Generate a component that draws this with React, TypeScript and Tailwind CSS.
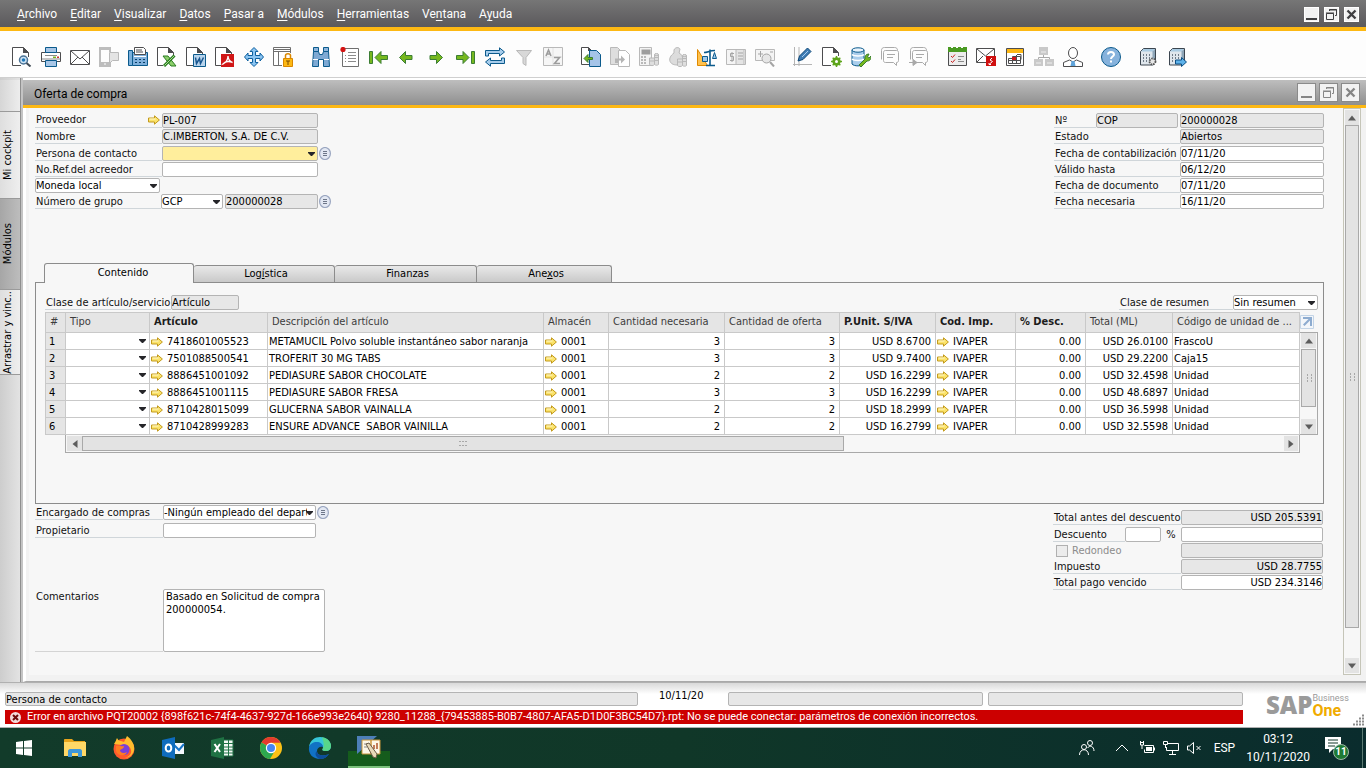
import React from "react";
import clsx from "clsx";

const ink = "#4d4d4f";
const dim = "#b9b9b9";
const blue = "#0b5a8c";

/* ---------- small shared pieces ---------- */

function Caret() {
  return (
    <svg viewBox="0 0 7 4" className="pointer-events-none absolute right-[3px] top-[6px] h-1 w-[7px]" aria-hidden="true">
      <path d="M0 0h7v1L4 4H3L0 1z" fill="#26262a" />
    </svg>
  );
}

function LinkArrow() {
  return (
    <svg viewBox="0 0 12 10" className="h-[10px] w-3 shrink-0" aria-hidden="true">
      <path d="M.5 3h6V.8L11.4 5 6.500 9.200V7h-6z" fill="#fbe36a" stroke="#c39a1c" />
      <path d="M1.500 4h6" stroke="#fff8cf" />
    </svg>
  );
}

function ListButton({ label }: { label: string }) {
  return (
    <button aria-label={label} className="ml-px mt-px h-[13px] w-3 shrink-0">
      <svg viewBox="0 0 12 13" className="h-[13px] w-3" aria-hidden="true">
        <ellipse cx="6" cy="6.500" rx="5.400" ry="6" fill="#e3e8f3" stroke="#9aa6c0" strokeWidth="1.200" />
        <path d="M4 4.500h4M4 6.500h4M4 8.500h4" stroke="#6d7688" />
      </svg>
    </button>
  );
}

type FieldProps = { id?: string; label?: string; value?: string; className?: string; off?: boolean; right?: boolean };

function Field({ id, label, value = "", className, off, right }: FieldProps) {
  return (
    <input
      id={id}
      aria-label={label}
      defaultValue={value}
      readOnly={off}
      className={clsx(
        "h-[15px] min-w-0 shrink-0 rounded-[2px] border border-[#b4b4b4] leading-[13px] text-black outline-none",
        off ? "bg-[#e7e7e7]" : "bg-white",
        right && "text-right",
        className
      )}
    />
  );
}

function Choice({ id, label, value = "", className, yellow }: FieldProps & { yellow?: boolean }) {
  return (
    <div className={clsx("relative h-[15px] shrink-0", className)}>
      <select
        id={id}
        aria-label={label}
        className={clsx(
          "block h-full w-full appearance-none overflow-hidden rounded-[2px] border border-[#b4b4b4] pr-2 leading-[13px] text-black outline-none",
          yellow ? "bg-[#ffee9c]" : "bg-white"
        )}
      >
        <option>{value}</option>
      </select>
      <Caret />
    </div>
  );
}

function Caption({ id, text, className }: { id?: string; text: string; className?: string }) {
  return (
    <label
      htmlFor={id}
      className={clsx("h-[15px] shrink-0 whitespace-nowrap border-b border-[#d0d6da] pl-px leading-4", className)}
    >
      {text}
    </label>
  );
}

function Dots({ tall }: { tall?: boolean }) {
  return (
    <svg viewBox="0 0 8 8" className={clsx("h-2 w-2", tall && "rotate-90")} aria-hidden="true">
      <path d="M0 1.500h2M3 1.500h2M6 1.500h2M0 5.500h2M3 5.500h2M6 5.500h2" stroke="#a8a8a8" />
    </svg>
  );
}

function Arrow({ d }: { d: string }) {
  return (
    <svg viewBox="0 0 8 8" className="h-2 w-2" aria-hidden="true">
      <path d={d} fill="#5c5c5c" />
    </svg>
  );
}

/* ---------- top bars ---------- */

const menus = [
  ["", "A", "rchivo"],
  ["", "E", "ditar"],
  ["", "V", "isualizar"],
  ["", "D", "atos"],
  ["", "P", "asar a"],
  ["", "M", "ódulos"],
  ["", "H", "erramientas"],
  ["Ve", "n", "tana"],
  ["A", "y", "uda"],
];

function WindowButtons({ big }: { big?: boolean }) {
  const box = clsx(
    "flex items-center justify-center border bg-[#f2f2f2]",
    big ? "h-[19px] w-[19px] border-[#8a8a8a] text-[#858585]" : "h-[15px] w-[15px] border-white text-[#3f3f41]"
  );
  return (
    <div className={clsx("flex", big ? "gap-[3px]" : "gap-[5px]")}>
      <button aria-label="Minimizar" className={box}>
        <svg viewBox="0 0 13 13" className="h-[13px] w-[13px]">
          <path d="M1 11h11" stroke="currentColor" strokeWidth="2" />
        </svg>
      </button>
      <button aria-label="Restaurar" className={box}>
        <svg viewBox="0 0 13 13" className="h-[13px] w-[13px]" fill="none" stroke="currentColor">
          <path d="M1.500 5.500h7v6h-7zM1 5h8M4.500 3V1.500h7v6H10M4 2h8" />
        </svg>
      </button>
      <button aria-label="Cerrar" className={box}>
        <svg viewBox="0 0 13 13" className="h-[13px] w-[13px]">
          <path d="M2.500 2.500l8 8M10.500 2.500l-8 8" stroke="currentColor" strokeWidth="2.400" />
        </svg>
      </button>
    </div>
  );
}

function MenuBar() {
  return (
    <header className="flex h-[31px] items-center justify-between border-b-4 border-[#fdb813] bg-linear-to-b from-[#767676] to-[#5b595c] pl-[17px] pr-[7px] pt-px">
      <nav className="flex gap-[13px] font-['Roboto',sans-serif] text-xs text-white">
        {menus.map(([a, key, b]) => (
          <a href="#" key={a + key + b}>
            {a}
            <span className="underline underline-offset-2">{key}</span>
            {b}
          </a>
        ))}
      </nav>
      <WindowButtons />
    </header>
  );
}

function Page({ c = ink }: { c?: string }) {
  return (
    <>
      <path d="M.5.500h11l5 5V18.500H.5z" fill="#fff" stroke={c} />
      <path d="M11 0l6 6h-6z" fill={c} />
    </>
  );
}

function Coins({ x = 10, y = 6 }: { x?: number; y?: number }) {
  return (
    <g transform={`translate(${x} ${y})`} fill="#dedede" stroke={dim}>
      <path d="M.5 5v6.500c1 1.500 4 1.500 5 0V5z" />
      <path d="M5.500 1.500v10c1 1 3 1 4 0v-10z" />
      <ellipse cx="7.500" cy="1.500" rx="2" ry="1" />
      <path d="M5.500 4.500h4M5.500 7.500h4M.5 8h5" />
    </g>
  );
}

function Server() {
  return (
    <>
      <path d="M1.500 4.500l3-3h12v13l-2.500 3.500H1.500z" fill="#dfe6ec" stroke="#3c4650" />
      <path d="M2 4.500L4.500 2H16l-2.500 2.500z" fill="#a9cbe2" />
      <path d="M13.500 4.500v13l2.500-3.500V2z" fill="#8fa6b8" />
      <path d="M4 8h1M7 8h1M10 8h1M4 11h1M7 11h1M10 11h1M4 14h1M7 14h1M10 14h1" stroke="#4c5a68" strokeWidth="1.500" />
    </>
  );
}

const green = { fill: "#76b81e", stroke: "#3b7d34" };

// one drawing per button, grouped as on the bar
const tools: [string, React.ReactNode][][] = [
  [
    ["Vista previa", <><Page /><path d="M9 10h8v9H9z" fill="#fff" /><circle cx="11.500" cy="13" r="4" fill="#cfe3f4" stroke="#4b7395" strokeWidth="1.500" /><circle cx="11.500" cy="13" r="1.800" fill="#1f78b8" /><path d="M14.500 16l4 3.500" stroke="#3f4a55" strokeWidth="2" /></>],
    ["Imprimir", <><path d="M.5 5.500h19v9H.5z" fill="#fff" stroke={ink} /><path d="M4.500.5h11v5h-11z" fill="#a8c6e6" stroke={blue} /><path d="M4 8.500h12M1 12h18" stroke="#8b8b8b" /><path d="M12 10.300h3" stroke="#7ab51d" strokeWidth="1.500" /><path d="M16 10.300h2" stroke="#c33" strokeWidth="1.500" /><path d="M4.500 13.500h11v6h-11z" fill="#a8c6e6" stroke={blue} /></>],
    ["Correo", <><path d="M.5 3.500h19v14H.5z" fill="#fff" stroke={ink} /><path d="M1 4l9 8 9-8M1 17l7-7M19 17l-7-7" fill="none" stroke={ink} /></>],
    ["SMS", <><path d="M0 0h12v5h-2V3H2v12h8v-2h2v7H0z" fill="#bdbdbd" /><path d="M5 17h2" stroke="#fff" /><path d="M10.500 5.500h9v8h-6l-3 3z" fill="#e4e4e4" stroke={dim} /></>],
    ["Fax", <><path d="M.5 3.500h4v15h-4z" fill="#7ab0dc" stroke={blue} /><path d="M4.500 5.500h15v13h-15z" fill="#7fb0dc" stroke={blue} /><path d="M6.500.5h9l2 2v5h-11z" fill="#fff" stroke={ink} /><path d="M8 3h6M8 5h7" stroke={ink} /><path d="M6 9.500h12" stroke="#fff" /><path d="M7 12.500h2M11 12.500h2M15 12.500h2M7 15.500h2M11 15.500h2M15 15.500h2" stroke="#073c63" /></>],
    ["Excel", <><Page /><path d="M6 8h14v12H6z" fill="#fff" /><path d="M6 9h5l8 10h-5z" fill="#8ccf6a" stroke="#2a7d22" /><path d="M17.500 8.500L7 19" stroke="#2a7d22" strokeWidth="3" /><path d="M17 9L7.500 18.500" stroke="#a9dd8c" /></>],
    ["Word", <><Page /><path d="M7.500 7.500h12v12h-12z" fill="#b8d4ec" stroke={blue} /><path d="M9.500 10.500l1 6 3-5 1 5 3-6" fill="none" stroke="#17558f" strokeWidth="1.500" /></>],
    ["PDF", <><Page /><path d="M6 7h13v13H6z" fill="#d01616" /><path d="M8 17c3-1 5-5 5-8 0 3 2 6 4.500 6.500C14 14 10 14.500 8 17z" fill="none" stroke="#fff" strokeWidth="1.300" /></>],
    ["Mover", <path d="M10 .5l4 4h-2.500V8.500H16V6l3.500 4L16 14v-2.500h-4.500v4H14l-4 4-4-4h2.500v-4H4V14L.5 10 4 6v2.500h4.500V4.500H6z" fill="#8cc5f2" stroke="#0d5f9e" />],
    ["Bloquear", <><path d="M.5.500h17v18H.5z" fill="#fff" stroke="#6f6f6f" /><path d="M1 2.500h16M1 4.500h16M5.500 5v13" stroke="#6f6f6f" /><path d="M9 6h9v13H9z" fill="#fff" /><path d="M12.500 11V8.500c0-2.500 5-2.500 5 0V11" fill="none" stroke="#d98700" strokeWidth="1.500" /><path d="M10.500 11.500h9v8h-9z" fill="#fdb813" stroke="#d98700" /><path d="M13 14h4M15 14v4" stroke="#7a4a00" /></>],
  ],
  [
    ["Buscar", <><path d="M2.500.5h5v4h-5zM12.500.5h5v4h-5z" fill="#8fb6dc" stroke={blue} /><path d="M2.500 4.500h5l1 3h3l1-3h5l1 15h-6v-7h-5v7h-6z" fill="#7ea9d3" stroke={blue} /><path d="M2 12.500h5M13 12.500h5" stroke="#fff" /></>],
    ["Lista", <><path d="M2.500 1.500h16v18h-16z" fill="#fff" stroke="#6f6f6f" /><path d="M8 5.500h8M8 8.500h8M8 11.500h8M8 14.500h8M5 8.500h1M5 11.500h1M5 14.500h1" stroke="#8b8b8b" /><circle cx="3" cy="2.500" r="2.600" fill="#d41313" /></>],
    ["Primer registro", <><path d="M.5 4.500h3v12h-3z" {...green} /><path d="M6 10.500l6-6v4h6.500v4H12v4z" {...green} /></>],
    ["Registro anterior", <path d="M1.500 10.500l6-6v4h6.500v4H7.500v4z" {...green} />],
    ["Registro siguiente", <path d="M15.500 10.500l-6-6v4H3v4h6.500v4z" {...green} />],
    ["Último registro", <><path d="M15.500 4.500h3v12h-3z" {...green} /><path d="M13 10.500l-6-6v4H.5v4H7v4z" {...green} /></>],
    ["Actualizar", <><path d="M.5 9V3.500h14V.8L19.500 5l-5 4V6.500h-11V9zM19.500 11v5.500h-14v2.700L.5 15l5-4v2.500h11V11z" fill="#a7cdec" stroke={blue} /></>],
    ["Filtrar", <><path d="M2.500 3.500h15L12 10.500v8l-3-2v-6z" fill="#d8d8d8" stroke={dim} /></>],
    ["Ordenar", <><path d="M.5.500h19v18H.5z" fill="#f6f6f6" stroke={dim} /><path d="M10 1v17M1 10h18" stroke="#e2e2e2" /><path d="M3 9l2.500-6L8 9M4 7h3M11 10.500h5.500l-5 6H17" fill="none" stroke="#9c9c9c" strokeWidth="1.600" /></>],
  ],
  [
    ["Copiar de", <><path d="M.5.500h7l3 3v14H.5z" fill="#fff" stroke={ink} /><path d="M7 0l4 4H7z" fill={ink} /><path d="M8.500 3.500h7l4 4v12h-11z" fill="#a5c4e8" stroke={blue} /><path d="M3 11.500l4-4v3h4.500v2H7v3z" {...green} /></>],
    ["Copiar a", <><path d="M.5.500h7l3 3v14H.5z" fill="#dedede" stroke={dim} /><path d="M8.500 3.500h7l4 4v12h-11z" fill="#fff" stroke={dim} /><path d="M5 16v-4.500h6v-3l4 4-4 4v-3H8V16z" fill="#b5b5b5" /></>],
    ["Beneficio", <><path d="M.5.500h12v18H.5z" fill="#f4f4f4" stroke={dim} /><path d="M2.500 2.500h9v5h-9z" fill="#9e9e9e" /><path d="M2 10h2M5 10h2M2 13h2M5 13h2M2 16h2M5 16h2" stroke="#a5a5a5" strokeWidth="1.500" /><Coins x={10} y={6} /></>],
    ["Medios de pago", <><path d="M6 3c1-3 5-3 6-1l-1 4C16 8 17 18 9 18S-1 11 6 6z" fill="#dcdcdc" stroke={dim} /><Coins x={9} y={7} /></>],
    ["Peso y volumen", <><path d="M.5 2.500V18.500h10z" fill="#ffc14d" stroke="#e08a00" /><path d="M13 2.500v16M9 18.500h9M7 5.500c4 0 5-2 11-2" fill="none" stroke={blue} strokeWidth="1.600" /><path d="M5.500 9.500h5v5h-5zM15.500 11.500l2-6 2 6z" fill="#9ec9ec" stroke={blue} /></>],
    ["Diario", <><path d="M.5 2.500h19v15H.5z" fill="#f4f4f4" stroke={dim} /><path d="M10 2.500h8v15h-8z" fill="#e4e4e4" stroke={dim} /><path d="M12 6h5M12 9h5M12 12h5" stroke="#a5a5a5" /><path d="M8 6.500H4.500v3h3v4H4M6 5v10" fill="none" stroke="#a5a5a5" /></>],
    ["Análisis", <><path d="M.5 2.500h19v11H.5z" fill="#f4f4f4" stroke={dim} /><path d="M3 7h5M5.500 4v6M15 5h3" stroke="#a5a5a5" /><circle cx="11.500" cy="11.500" r="4.500" fill="#e6e6e6" stroke="#a5a5a5" /><path d="M15 15l4 4.500" stroke="#a5a5a5" strokeWidth="2" /></>],
  ],
  [
    ["Editar", <><path d="M1.500 0v19M0 17.500h19M6 0v19" stroke="#b5b5b5" /><path d="M5 14l1.500-5 8-8L18 4.500l-8 8z" fill="#3f7db5" stroke="#0d4777" /><path d="M9 10l6-6" stroke="#a9cdf0" /></>],
    ["Parámetros", <><Page /><path d="M9 9h9v10H9z" fill="#fff" /><circle cx="14.500" cy="14.500" r="3" fill="#fff" stroke="#5ea51b" strokeWidth="2.400" /><path d="M14.500 9v11M9 14.500h11M10.700 10.700l7.600 7.600M18.300 10.700l-7.600 7.600" stroke="#5ea51b" strokeWidth="1.500" /><circle cx="14.500" cy="14.500" r="1.500" fill="#fff" /></>],
    ["Base de datos", <><path d="M1 3v14c2 2.500 10 2.500 12 0V3z" fill="#a9cdec" stroke={blue} /><ellipse cx="7" cy="3" rx="6" ry="2.200" fill="#eaf4fc" stroke={blue} /><path d="M1 7.500c2 2 10 2 12 0M1 12c2 2 10 2 12 0" fill="none" stroke="#fff" strokeWidth="1.500" /><path d="M8 18l6-6c-.5-3 1-5 4-5l-1.500 3 1.500 1 2-2c0 4-1.500 5-4 5l-6 6z" fill="#76b81e" stroke="#3b7d34" /></>],
    ["Mensajes", <g fill="#fdfdfd" stroke="#a9a9a9"><path d="M1.500 12.500v-9c0-2 1-3 3-3h10c2 0 3 1 3 3" /><path d="M3.500 5.500c0-1 .5-2 2-2h11c1.500 0 2 1 2 2v8c0 1-.5 2-2 2v3l-3-3h-8c-1.500 0-2-1-2-2z" /><path d="M7 7.500h8M7 10.500h6" /></g>],
    ["Reenviar mensaje", <g fill="#fdfdfd" stroke="#a9a9a9"><path d="M1.500 12.500v-9c0-2 1-3 3-3h10c2 0 3 1 3 3" /><path d="M3.500 12.500v-7c0-1 .5-2 2-2h11c1.500 0 2 1 2 2v8c0 1-.5 2-2 2v3l-3-3h-6" /><path d="M7 7.500h8M7 10.500h6M0 15.500h6" /><path d="M4 12.500l4 3-4 3z" fill="#a9a9a9" /></g>],
  ],
  [
    ["Tareas", <><path d="M1.500 3.500h18v15h-18z" fill="#ececec" stroke={ink} /><path d="M1 0h3v1h2V0h3v1h2V0h3v1h2V0h4v5H1z" fill="#4a9a22" /><path d="M4 9l1.500 1.500L8 7.500M4 14l1.500 1.500L8 12.500" fill="none" stroke="#c22" /><path d="M11 9.500h6M11 12.500h3M11 14.500h6" stroke="#8b8b8b" /></>],
    ["Alertas", <><path d="M.5 1.500h18v14H.5z" fill="#fff" stroke={ink} /><path d="M1 2l8.500 7L18 2M1 15l6-6" fill="none" stroke={ink} /><path d="M10 9h10v10H10z" fill="#cf1010" /><path d="M16 11l-2 2 2.500 1.500-3 2.500M13 16v1.500h2" fill="none" stroke="#fff" /></>],
    ["Calendario", <><path d="M1.500 1.500h17v17h-17z" fill="#fff" stroke={ink} /><path d="M2 2h16v4H2z" fill="#fdb813" /><path d="M3.500 11.500h4v5h-4zM7.500 9.500h8v7h-8zM3.500 13.500h12M11.500 8v8M12 7.500h4v5" stroke={ink} /><path d="M7 10h4v3H7z" fill="#d01616" /></>],
    ["Organigrama", <><path d="M5 0h9v8H5zM0 12h9v7H0zM11 12h9v7h-9z" fill="#c9c9c9" /><path d="M9.500 8v2.500M4.500 12v-1.500h11V12" fill="none" stroke="#a9a9a9" /><path d="M7 5h5M2 16h5M13 16h5" stroke="#efefef" /></>],
    ["Usuario", <><ellipse cx="10" cy="6" rx="4.500" ry="5.500" fill="#fff" stroke={ink} /><path d="M.5 19.500v-4l6-2.500 3.500 2 3.500-2 6 2.500v4z" fill="#fff" stroke={ink} /><path d="M8.500 14h3l1 5h-5z" fill="#5fa3da" /></>],
  ],
  [
    ["Ayuda", <><circle cx="10" cy="10" r="9.500" fill="#86b2dc" stroke={blue} /><path d="M7 7.500C7 4 13 4 13 7.500c0 2-3 2.200-3 4.500M10 13.500v2" fill="none" stroke="#fff" strokeWidth="2" /></>],
  ],
  [
    ["Servidor", <><Server /><circle cx="13.500" cy="14.500" r="3" fill="#e6e6e6" stroke="#555" strokeWidth="1.800" strokeDasharray="1.500 1" /></>],
    ["Exportar", <><Server /><path d="M7.500 13h6v-2.500l5 4.500-5 4.500V17h-6z" fill="#5eb2ea" stroke="#0d4f84" /></>],
  ],
];

function Toolbar() {
  return (
    <div className="flex h-[47px] items-start gap-[9px] border-b border-[#cfcfcf] bg-[#fdfdfd] pl-[7px] pt-4">
      {tools.map((group, i) => (
        <div key={i} className="flex">
          {group.map(([name, art]) => (
            <button key={name} aria-label={name} title={name} className="w-[29px] pl-[5px]">
              <svg viewBox="0 0 20 20" className="h-5 w-5" fill="none" aria-hidden="true">
                {art}
              </svg>
            </button>
          ))}
        </div>
      ))}
    </div>
  );
}

/* ---------- left rail ---------- */

function Rail() {
  const tab = "flex items-center justify-center border-b border-[#9a9a9a] bg-linear-to-r pr-[3px]";
  const text = "rotate-180 whitespace-nowrap [writing-mode:vertical-rl]";
  return (
    <aside className="flex w-[21px] shrink-0 flex-col border-r border-[#8f8f8f] bg-linear-to-r from-[#cdcdcd] to-[#e3e3e3] pt-[2px] text-black">
      <div className={clsx(tab, "h-8 from-[#d6d6d6] to-[#ededed]")} />
      <button className={clsx(tab, "h-[87px] from-[#dedede] to-[#efefef]")}>
        <span className={text}>Mi cockpit</span>
      </button>
      <button className={clsx(tab, "h-[91px] from-[#a6a6a6] to-[#bdbdbd]")}>
        <span className={text}>Módulos</span>
      </button>
      <button className={clsx(tab, "h-[85px] from-[#dedede] to-[#efefef]")}>
        <span className={text}>Arrastrar y vinc..</span>
      </button>
    </aside>
  );
}

/* ---------- document window ---------- */

function Heading() {
  return (
    <div className="flex items-start justify-between">
      <div className="flex flex-col gap-px">
        <div>
          <div className="flex h-4">
            <label htmlFor="prov" className="flex h-[15px] w-[127px] shrink-0 items-center justify-between border-b border-[#d0d6da] pl-px pr-[2px] leading-4">
              Proveedor
              <LinkArrow />
            </label>
            <Field id="prov" value="PL-007" off className="w-[156px]" />
          </div>
          <div className="flex h-4">
            <Caption id="nombre" text="Nombre" className="w-[127px]" />
            <Field id="nombre" value="C.IMBERTON, S.A. DE C.V." off className="w-[156px]" />
          </div>
        </div>
        <div>
          <div className="flex h-4">
            <Caption id="persona" text="Persona de contacto" className="w-[127px]" />
            <Choice id="persona" yellow className="w-[156px]" />
            <ListButton label="Lista de contactos" />
          </div>
          <div className="flex h-4">
            <Caption id="ref" text="No.Ref.del acreedor" className="w-[127px]" />
            <Field id="ref" className="w-[156px]" />
          </div>
          <div className="flex h-4">
            <Choice label="Moneda" value="Moneda local" className="w-[125px]" />
          </div>
          <div className="flex h-4">
            <Caption id="grupo" text="Número de grupo" className="w-[126px]" />
            <Choice id="grupo" value="GCP" className="w-[62px]" />
            <Field label="Número" value="200000028" off className="ml-[2px] w-[93px]" />
            <ListButton label="Lista de grupos" />
          </div>
        </div>
      </div>

      <div className="flex flex-col gap-px">
        <div>
          <div className="flex h-4">
            <Caption id="serie" text="Nº" className="w-[42px]" />
            <Field id="serie" value="COP" off className="mr-[2px] w-[82px]" />
            <Field label="Número de documento" value="200000028" off className="w-36" />
          </div>
          <div className="flex h-4">
            <Caption id="estado" text="Estado" className="w-[126px]" />
            <Field id="estado" value="Abiertos" off className="w-36" />
          </div>
        </div>
        <div>
          {[
            ["Fecha de contabilización", "07/11/20"],
            ["Válido hasta", "06/12/20"],
            ["Fecha de documento", "07/11/20"],
            ["Fecha necesaria", "16/11/20"],
          ].map(([name, value]) => (
            <div key={name} className="flex h-4">
              <Caption id={name} text={name} className="w-[126px]" />
              <Field id={name} value={value} className="w-36" />
            </div>
          ))}
        </div>
      </div>
    </div>
  );
}

function Tabs() {
  const rest =
    "h-[17px] rounded-t-[3px] border border-b-0 border-l-0 border-[#8c8c8c] bg-linear-to-b from-[#e9e9e9] to-[#c9c9c9] pl-1";
  return (
    <div role="tablist" className="flex items-end pl-[9px] text-black">
      <button role="tab" aria-selected="true" className="relative -mb-px h-5 w-[150px] rounded-t-[3px] border border-b-0 border-[#8c8c8c] bg-[#f7f7f7] pl-2">
        Contenido
      </button>
      <button role="tab" className={clsx(rest, "w-[141px]")}>
        Log<u>í</u>stica
      </button>
      <button role="tab" className={clsx(rest, "w-[142px]")}>
        Finanzas
      </button>
      <button role="tab" className={clsx(rest, "w-[135px]")}>
        Ane<u>x</u>os
      </button>
    </div>
  );
}

const columns: [string, string, boolean?][] = [
  ["#", "w-5"],
  ["Tipo", "w-[84px]"],
  ["Artículo", "w-[118px]", true],
  ["Descripción del artículo", "w-[276px]"],
  ["Almacén", "w-[65px]"],
  ["Cantidad necesaria", "w-[116px]"],
  ["Cantidad de oferta", "w-[115px]"],
  ["P.Unit. S/IVA", "w-[96px]", true],
  ["Cod. Imp.", "w-20", true],
  ["% Desc.", "w-[70px]", true],
  ["Total (ML)", "w-[87px]"],
  ["Código de unidad de ...", ""],
];

const items = [
  ["7418601005523", "METAMUCIL Polvo soluble instantáneo sabor naranja", "3", "USD 8.6700", "USD 26.0100", "FrascoU"],
  ["7501088500541", "TROFERIT 30 MG TABS", "3", "USD 9.7400", "USD 29.2200", "Caja15"],
  ["8886451001092", "PEDIASURE SABOR CHOCOLATE", "2", "USD 16.2299", "USD 32.4598", "Unidad"],
  ["8886451001115", "PEDIASURE SABOR FRESA", "3", "USD 16.2299", "USD 48.6897", "Unidad"],
  ["8710428015099", "GLUCERNA SABOR VAINALLA", "2", "USD 18.2999", "USD 36.5998", "Unidad"],
  ["8710428999283", "ENSURE ADVANCE  SABOR VAINILLA", "2", "USD 16.2799", "USD 32.5598", "Unidad"],
];

const cell = "h-[17px] overflow-hidden whitespace-pre border-b border-r border-[#c9c9c9] pt-px leading-[15px] text-black";

function Linked({ text }: { text: string }) {
  return (
    <span className="flex items-center gap-1 pl-px">
      <LinkArrow />
      {text}
    </span>
  );
}

function Items() {
  return (
    <table className="w-full table-fixed border-separate border-spacing-0 border-l border-t border-[#c9c9c9] bg-white">
      <thead>
        <tr>
          {columns.map(([name, width, bold]) => (
            <th
              key={name}
              className={clsx(
                "h-5 whitespace-nowrap border-b border-r border-[#c9c9c9] bg-[#e5e5e5] pb-[2px] pl-1 pr-0 pt-0 text-left leading-4",
                width,
                bold ? "font-bold text-[#1c1c1c]" : "font-normal text-[#3c3c3c]"
              )}
            >
              {name}
            </th>
          ))}
        </tr>
      </thead>
      <tbody>
        {items.map(([code, name, qty, price, total, unit], i) => (
          <tr key={code}>
            <td className={clsx(cell, "bg-[#e5e5e5] pl-[3px]")}>{i + 1}</td>
            <td className={cell}>
              <div className="relative -mt-px">
                <select aria-label={`Tipo ${i + 1}`} className="block h-4 w-full appearance-none outline-none">
                  <option></option>
                </select>
                <Caret />
              </div>
            </td>
            <td className={cell}>
              <Linked text={code} />
            </td>
            <td className={clsx(cell, "pl-px")}>{name}</td>
            <td className={cell}>
              <Linked text="0001" />
            </td>
            <td className={clsx(cell, "pr-1 text-right")}>{qty}</td>
            <td className={clsx(cell, "pr-1 text-right")}>{qty}</td>
            <td className={clsx(cell, "pr-1 text-right")}>{price}</td>
            <td className={cell}>
              <Linked text="IVAPER" />
            </td>
            <td className={clsx(cell, "pr-1 text-right")}>0.00</td>
            <td className={clsx(cell, "pr-1 text-right")}>{total}</td>
            <td className={clsx(cell, "pl-px")}>{unit}</td>
          </tr>
        ))}
      </tbody>
    </table>
  );
}

function Content() {
  return (
    <section className="min-h-[222px] border border-[#8c8c8c] pb-[50px] pl-[9px] pr-[5px] pt-3">
      <div className="flex justify-between">
        <div className="flex">
          <Caption id="clase" text="Clase de artículo/servicio" className="w-[126px]" />
          <Field id="clase" value="Artículo" off className="w-[68px]" />
        </div>
        <div className="flex">
          <Caption id="resumen" text="Clase de resumen" className="w-[114px]" />
          <Choice id="resumen" value="Sin resumen" className="w-[85px]" />
        </div>
      </div>

      <div className="mt-[2px] flex">
        <div className="min-w-0 flex-1">
          <Items />
          <div className="ml-5 flex h-[18px] items-center border border-t-0 border-[#a9a9a9] px-px">
            <button aria-label="Izquierda" className="flex h-[15px] w-[15px] items-center justify-center bg-[#e3e3e3]">
              <Arrow d="M1.500 4l5-4v8z" />
            </button>
            <div className="flex h-[15px] min-w-0 flex-1">
              <div className="flex w-[762px] items-center justify-center border border-[#a9a9a9] bg-[#e3e3e3]">
                <Dots />
              </div>
            </div>
            <button aria-label="Derecha" className="flex h-[15px] w-[14px] items-center justify-center bg-[#e3e3e3]">
              <Arrow d="M6.500 4l-5-4v8z" />
            </button>
          </div>
        </div>
        <div className="flex w-[18px] flex-col pb-[18px]">
          <button aria-label="Ampliar" className="h-5">
            <svg viewBox="0 0 14 14" className="h-[14px] w-[14px]">
              <path d="M.5.500h13v13H.5z" fill="#f3f6fa" stroke="#c3d4e6" />
              <path d="M3 2h9v9h-2V5.500L4.500 11 3 9.500 8.500 4H3z" fill="#8eacd0" />
            </svg>
          </button>
          <div className="flex flex-1 flex-col border border-l-0 border-[#a9a9a9] px-px">
            <button aria-label="Subir" className="flex h-[15px] items-center justify-center bg-[#e3e3e3]">
              <Arrow d="M4 1.500l4 5H0z" />
            </button>
            <div className="mt-px flex h-[58px] items-center justify-center border border-[#a9a9a9] bg-[#e3e3e3]">
              <Dots tall />
            </div>
            <button aria-label="Bajar" className="mt-auto flex h-[15px] items-center justify-center bg-[#e3e3e3]">
              <Arrow d="M4 6.500l-4-5h8z" />
            </button>
          </div>
        </div>
      </div>
    </section>
  );
}

function Footing() {
  return (
    <div className="flex items-start justify-between pr-px">
      <div className="pt-px">
        <div className="flex">
          <Caption id="encargado" text="Encargado de compras" className="w-32" />
          <Choice id="encargado" value="-Ningún empleado del departamento" className="w-[153px]" />
          <ListButton label="Lista de empleados" />
        </div>
        <div className="mt-[3px] flex">
          <Caption id="propietario" text="Propietario" className="w-32" />
          <Field id="propietario" className="w-[153px]" />
        </div>
        <div className="mt-[51px] flex">
          <label htmlFor="comentarios" className="w-32 border-b border-[#d4d4d4] pl-px leading-4">
            Comentarios
          </label>
          <textarea
            id="comentarios"
            defaultValue="Basado en Solicitud de compra 200000054."
            className="h-[63px] w-[162px] resize-none rounded-[2px] border border-[#b4b4b4] bg-white pl-[2px] leading-[13px] text-black outline-none"
          />
        </div>
      </div>

      <div className="flex flex-col gap-px pt-[6px]">
        <div className="flex h-4">
          <Caption id="antes" text="Total antes del descuento" className="w-32" />
          <Field id="antes" value="USD 205.5391" off right className="w-[142px]" />
        </div>
        <div>
          <div className="flex h-4">
            <Caption id="desc" text="Descuento" className="w-[72px]" />
            <Field id="desc" className="w-9" />
            <span className="w-5 text-center leading-4">%</span>
            <Field label="Importe de descuento" className="w-[142px]" />
          </div>
          <div className="flex h-4">
            <label className="flex w-32 items-center gap-1 pl-[3px] leading-4 text-[#8c8c8c]">
              <input type="checkbox" disabled className="h-3 w-3 appearance-none border border-[#b0b0b0] bg-[#ececec]" />
              Redondeo
            </label>
            <Field label="Importe de redondeo" off className="w-[142px]" />
          </div>
          <div className="flex h-4">
            <Caption id="impuesto" text="Impuesto" className="w-32" />
            <Field id="impuesto" value="USD 28.7755" off right className="w-[142px]" />
          </div>
          <div className="flex h-4">
            <Caption id="total" text="Total pago vencido" className="w-32" />
            <Field id="total" value="USD 234.3146" right className="w-[142px]" />
          </div>
        </div>
      </div>
    </div>
  );
}

function DocumentWindow() {
  return (
    <main className="flex min-w-0 flex-1 flex-col border-l-2 border-[#c4c4c4] bg-white pt-[2px]">
      <div className="flex h-7 items-center justify-between border-b-3 border-[#fdb813] bg-linear-to-b from-[#bebebe] to-[#8f8f8f] pl-[11px] pr-[6px]">
        <h1 className="pt-[2px] font-['Roboto',sans-serif] text-xs text-black">Oferta de compra</h1>
        <WindowButtons big />
      </div>
      <div className="flex flex-1 border-b border-l-3 border-b-[#a9a9a9] border-l-white bg-[#f2f2f2] pb-[6px] pl-[3px]">
        <div className="flex min-w-0 flex-1 flex-col bg-[#f7f7f7] pl-[6px] pr-[19px] pt-[5px]">
          <Heading />
          <div className="mt-[53px]">
            <Tabs />
            <Content />
          </div>
          <Footing />
        </div>
        <div className="mr-[5px] flex w-[18px] flex-col border border-[#c5c5b8] bg-[#f7f7f7] p-px">
          <button aria-label="Subir página" className="flex h-[15px] items-center justify-center bg-[#e3e3e3]">
            <Arrow d="M4 1.500l4 5H0z" />
          </button>
          <div className="flex flex-1 flex-col">
            <div className="flex h-[503px] items-center justify-center border border-[#a9a9a9] bg-[#e3e3e3]">
              <Dots tall />
            </div>
          </div>
          <button aria-label="Bajar página" className="flex h-[15px] items-center justify-center bg-[#e3e3e3]">
            <Arrow d="M4 6.500l-4-5h8z" />
          </button>
        </div>
      </div>
    </main>
  );
}

/* ---------- status bar ---------- */

function StatusBar() {
  const box = "h-[14px] rounded-[2px] border border-[#b4b4b4] bg-[#e7e7e7] leading-[13px]";
  return (
    <footer className="flex h-[46px] items-start border-y border-[#b0b0b0] bg-linear-to-b from-[#d9d9d9] to-white to-25% pl-[5px] text-black">
      <div className="flex-1 pt-[9px]">
        <div className="flex">
          <div className={clsx(box, "w-[633px]")}>Persona de contacto</div>
          <div className="-mt-1 w-[90px] pl-[21px] leading-4">10/11/20</div>
          <div className={clsx(box, "mr-[5px] flex-1")} />
          <div className={clsx(box, "flex-1")} />
        </div>
        <div role="alert" className="mt-1 flex h-[14px] items-center gap-[6px] bg-[#cc0000] pl-[5px] font-['Roboto',sans-serif] leading-[14px] text-white">
          <svg viewBox="0 0 11 11" className="h-[11px] w-[11px]" aria-hidden="true">
            <circle cx="5.500" cy="5.500" r="5.500" fill="#f3dada" />
            <path d="M3 3l5 5M8 3L3 8" stroke="#6d0808" strokeWidth="2" />
          </svg>
          Error en archivo PQT20002 &#123;898f621c-74f4-4637-927d-166e993e2640&#125; 9280_11288_&#123;79453885-B0B7-4807-AFA5-D1D0F3BC54D7&#125;.rpt: No se puede conectar: parámetros de conexión incorrectos.
        </div>
      </div>
      <div className="relative flex h-full w-[123px] items-center pl-[23px] font-['Open_Sans',sans-serif]">
        <span className="text-2xl font-extrabold leading-6 text-[#9a9a9a]">SAP</span>
        <span className="flex flex-col font-['Roboto',sans-serif]">
          <span className="text-[9px] leading-[11px] text-[#9a9a9a]">Business</span>
          <span className="text-base font-bold leading-[14px] text-[#f0ab00]">One</span>
        </span>
        <svg viewBox="0 0 12 12" className="absolute bottom-px right-px h-3 w-3" aria-hidden="true">
          <path d="M9 1.500h2M6 4.500h5M3 7.500h8M0 10.500h11" stroke="#8c8c8c" strokeWidth="2" strokeDasharray="2 1" />
        </svg>
      </div>
    </footer>
  );
}

/* ---------- taskbar ---------- */

const apps: [string, React.ReactNode][] = [
  ["Explorador", <><path d="M1 4c0-1 .5-1 1-1h7l2 2h11v15H1z" fill="#e8a51c" /><path d="M1 6h22v14H1z" fill="#ffd867" /><path d="M5 21v-6c0-1 1-2 2-2h10c1 0 2 1 2 2v6h-4v-4H9v4z" fill="#3f97d8" /></>],
  ["Firefox", <><circle cx="12" cy="13" r="10.500" fill="#ff5a2c" /><path d="M2 8c2-3 2-4 3-6 1 2 2 3 4 3l3 1 3-6c4 3 8 8 7 14-1 5-5 8-10 8 6-1 8-5 7-8-1-4-5-6-9-5z" fill="#ffbd2e" /><circle cx="12" cy="13.500" r="5.500" fill="#7a3fd8" /><path d="M4 10c3-1 5 1 8 0 0 3-3 3-4 4 0 3 4 4 7 2-1 4-9 5-11-1z" fill="#ff7b22" /></>],
  ["Outlook", <><path d="M12 7h11v11H12z" fill="#f5f9fd" /><path d="M13 9l5 5 5-6" fill="none" stroke="#1674c9" strokeWidth="2" /><path d="M1 4l13-3v22L1 20z" fill="#0f6cbd" /><ellipse cx="7.500" cy="12" rx="2.800" ry="3.600" fill="none" stroke="#fff" strokeWidth="2" /></>],
  ["Excel", <><path d="M13 4h10v16H13z" fill="#f3f8f5" stroke="#217346" /><path d="M13 7.500h10M13 11h10M13 14h10M13 17h10M18.500 4v16" stroke="#217346" /><path d="M1 4l13-3v22L1 20z" fill="#1f7244" /><path d="M4.500 8l5.500 8M10 8l-5.500 8" stroke="#fff" strokeWidth="2" /></>],
  ["Chrome", <><circle cx="12" cy="12" r="11" fill="#fbc116" /><path d="M12 12L2.500 6.500A11 11 0 0 1 21.600 6.800H12z" fill="#e33b2e" /><path d="M2.500 6.500A11 11 0 0 0 11 23l5-8.500-4-2.500z" fill="#2da94f" /><circle cx="12" cy="12" r="5.200" fill="#fff" /><circle cx="12" cy="12" r="4" fill="#4586f3" /></>],
  ["Edge", <><path d="M1 11C2 4 7 1 12 1c7 0 11 5 11 9 0 3-2 5-5 5-4 0-4-1-3-3 0-3-3-5-6-5-4 0-7 2-8 4z" fill="#37c6d9" /><path d="M14 1.200C20 2 23 6 23 10c0 3-2 5-5 5-4 0-4-1-3-3 2-3 0-7-1-10.800z" fill="#58d68a" /><path d="M1 11c1-3 4-5 8-5 3 0 6 2 6 5-3-1-6 1-6 4 0 4 5 6 12 3-2 3-5 5-9 5C5 23 0 18 1 11z" fill="#1172c4" /><path d="M9 15c0 4 5 6 12 3-2 3-5 5-9 5-4-1-6-6-3-8z" fill="#0d4d98" /></>],
  ["SAP Business One", <><path d="M0 0h20L0 18z" fill="#4d7fb8" /><path d="M5 4h9v14H5zM14 4h9v14h-9z" fill="#fdf7e6" stroke="#c9953b" /><path d="M7 8h4M7 11h3" stroke="#8a8a8a" /><path d="M17 13V9M20 13V7" stroke="#b0562a" strokeWidth="1.500" /><path d="M9 8l3-1 8 11-1 4-3-1z" fill="#e8d9b8" stroke="#6a5a45" /></>],
];

function Taskbar() {
  return (
    <div className="flex h-10 items-stretch justify-between bg-linear-to-r from-[#123b2a] via-[#103728] to-[#0a2c2d] font-['Roboto',sans-serif] text-xs text-white">
      <div className="flex">
        <button aria-label="Inicio" className="flex w-[50px] items-center pl-4">
          <svg viewBox="0 0 16 16" className="h-4 w-4" fill="#fff">
            <path d="M0 2l7-1v6.500H0zM8 .9L16 0v7.500H8zM0 8.500h7V15l-7-1zM8 8.500h8V16l-8-1z" />
          </svg>
        </button>
        {apps.map(([name, art], i) => (
          <button
            key={name}
            aria-label={name}
            className={clsx(
              "flex items-center justify-center",
              i === 6
                ? "ml-1 w-[42px] border-b-2 border-[#7cc17c] bg-linear-to-b from-transparent from-60% to-[#155c1c] to-60% pt-[2px]"
                : "w-[49px]"
            )}
          >
            <svg viewBox="0 0 24 24" className="h-6 w-6">
              {art}
            </svg>
          </button>
        ))}
      </div>
      <div className="flex items-center">
        <svg viewBox="0 0 16 16" className="mr-[20px] h-4 w-4" fill="none" stroke="#fff">
          <circle cx="5" cy="7" r="2.500" />
          <path d="M.5 15c0-7 9-7 9 0" />
          <circle cx="11" cy="3" r="2.500" />
          <path d="M8.500 8c2-3 6.500-2 6.500 3" />
        </svg>
        <svg viewBox="0 0 14 8" className="mr-[10px] h-2 w-[14px]" fill="none" stroke="#fff">
          <path d="M1 7l6-6 6 6" />
        </svg>
        <svg viewBox="0 0 16 14" className="mr-2 h-[14px] w-4" fill="none" stroke="#fff">
          <path d="M5.500 4.500h9v7h-9v-3M15.500 6.500v3M1 1.500h4M1.500 0v4h3V0M3 4v4" />
          <path d="M7 6h6v4H7z" fill="#fff" stroke="none" />
        </svg>
        <svg viewBox="0 0 16 14" className="mr-2 h-[14px] w-4" fill="none" stroke="#fff">
          <path d="M5 2.500h10.500v7H3.500V6M9.500 10v3M6 13.500h7M.5.500h4v3h-4zM2.500 4v3" />
        </svg>
        <svg viewBox="0 0 16 12" className="mr-[11px] h-3 w-4" fill="none" stroke="#fff">
          <path d="M.5 4v4h2l4 3.500V.5L2.500 4zM9.500 4l4 4M13.500 4l-4 4" />
        </svg>
        <span className="mr-[11px]">ESP</span>
        <div className="mr-[15px] text-center leading-[18px]">
          03:12
          <br />
          10/11/2020
        </div>
        <button aria-label="Notificaciones" className="relative mr-[13px] h-6 w-6">
          <svg viewBox="0 0 24 24" className="h-6 w-6">
            <path d="M0 1h16v12h-8l-4 4v-4H0z" fill="#fff" />
            <path d="M3 4h10M3 7h10M3 10h7" stroke="#12372b" />
            <circle cx="16" cy="16" r="7.500" fill="#1f7a35" stroke="#9db8a6" />
          </svg>
          <span className="absolute bottom-px right-0 w-4 text-center text-[10px] font-bold leading-[14px]">11</span>
        </button>
        <span className="mr-[3px] h-full border-l border-[#5b7a72]" />
      </div>
    </div>
  );
}

export default function App() {
  return (
    <div className="flex min-h-screen flex-col overflow-hidden bg-white font-['DejaVu_Sans_Condensed',sans-serif] text-[11px] text-[#111]">
      <MenuBar />
      <Toolbar />
      <div className="flex flex-1">
        <Rail />
        <DocumentWindow />
      </div>
      <StatusBar />
      <Taskbar />
    </div>
  );
}
